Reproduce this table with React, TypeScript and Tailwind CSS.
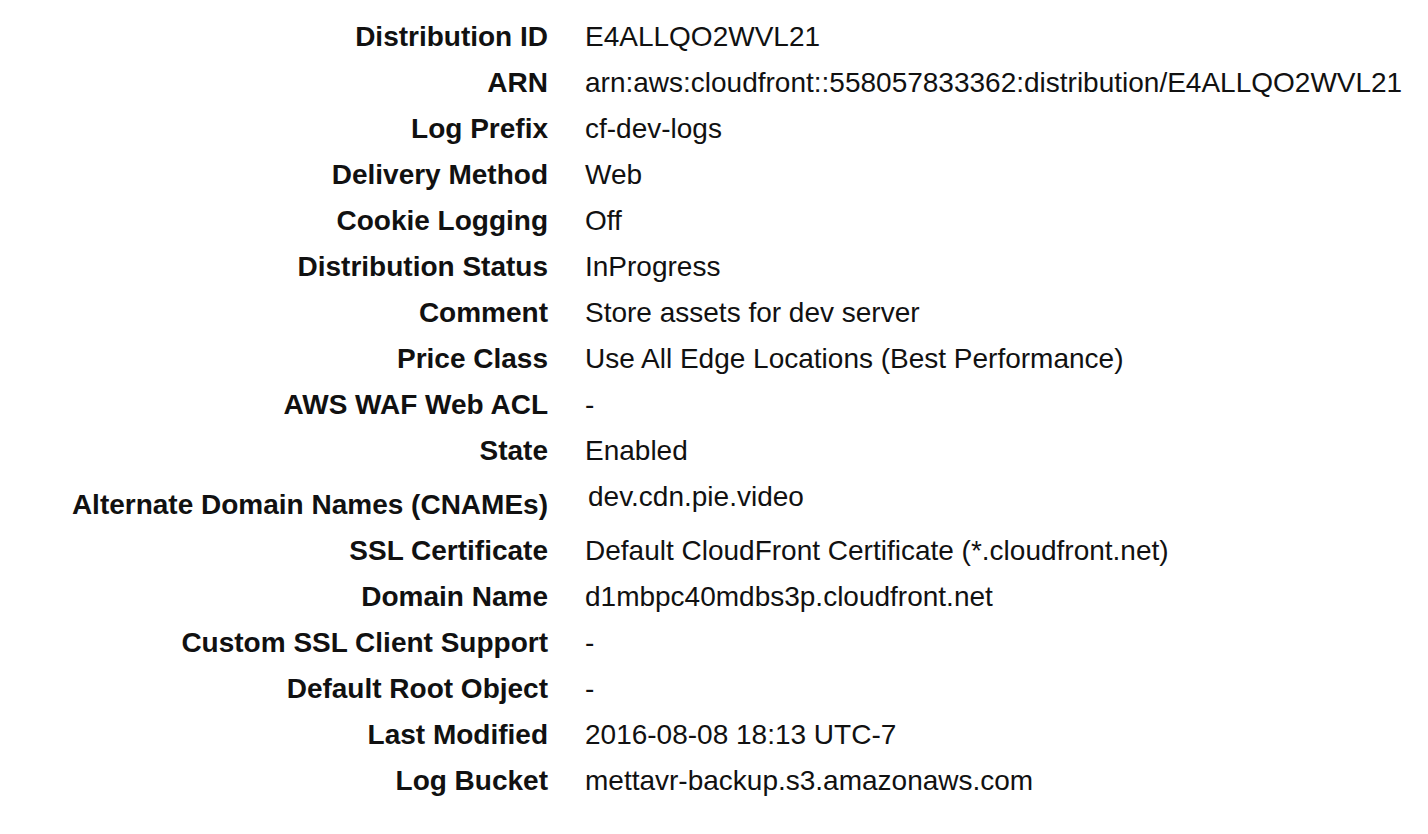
const rows: { label: string; value: string; tall?: boolean }[] = [
  { label: "Distribution ID", value: "E4ALLQO2WVL21" },
  { label: "ARN", value: "arn:aws:cloudfront::558057833362:distribution/E4ALLQO2WVL21" },
  { label: "Log Prefix", value: "cf-dev-logs" },
  { label: "Delivery Method", value: "Web" },
  { label: "Cookie Logging", value: "Off" },
  { label: "Distribution Status", value: "InProgress" },
  { label: "Comment", value: "Store assets for dev server" },
  { label: "Price Class", value: "Use All Edge Locations (Best Performance)" },
  { label: "AWS WAF Web ACL", value: "-" },
  { label: "State", value: "Enabled" },
  { label: "Alternate Domain Names (CNAMEs)", value: "dev.cdn.pie.video", tall: true },
  { label: "SSL Certificate", value: "Default CloudFront Certificate (*.cloudfront.net)" },
  { label: "Domain Name", value: "d1mbpc40mdbs3p.cloudfront.net" },
  { label: "Custom SSL Client Support", value: "-" },
  { label: "Default Root Object", value: "-" },
  { label: "Last Modified", value: "2016-08-08 18:13 UTC-7" },
  { label: "Log Bucket", value: "mettavr-backup.s3.amazonaws.com" },
]

export default function App() {
  return (
    <div className="min-h-[834px] w-[1428px] overflow-hidden bg-white pt-[14px] font-['Liberation_Sans',Arial,sans-serif] text-[28px] text-[#111]">
      {rows.map((row) => (
        <div key={row.label} className="flex items-start">
          <div className={`w-[548px] shrink-0 text-right font-bold leading-[46px] ${row.tall ? "pt-2" : ""}`}>
            {row.label}
          </div>
          <div className={`whitespace-nowrap pl-[37px] leading-[46px] ${row.tall ? "ml-[3px]" : ""}`}>
            {row.value}
          </div>
        </div>
      ))}
    </div>
  )
}
